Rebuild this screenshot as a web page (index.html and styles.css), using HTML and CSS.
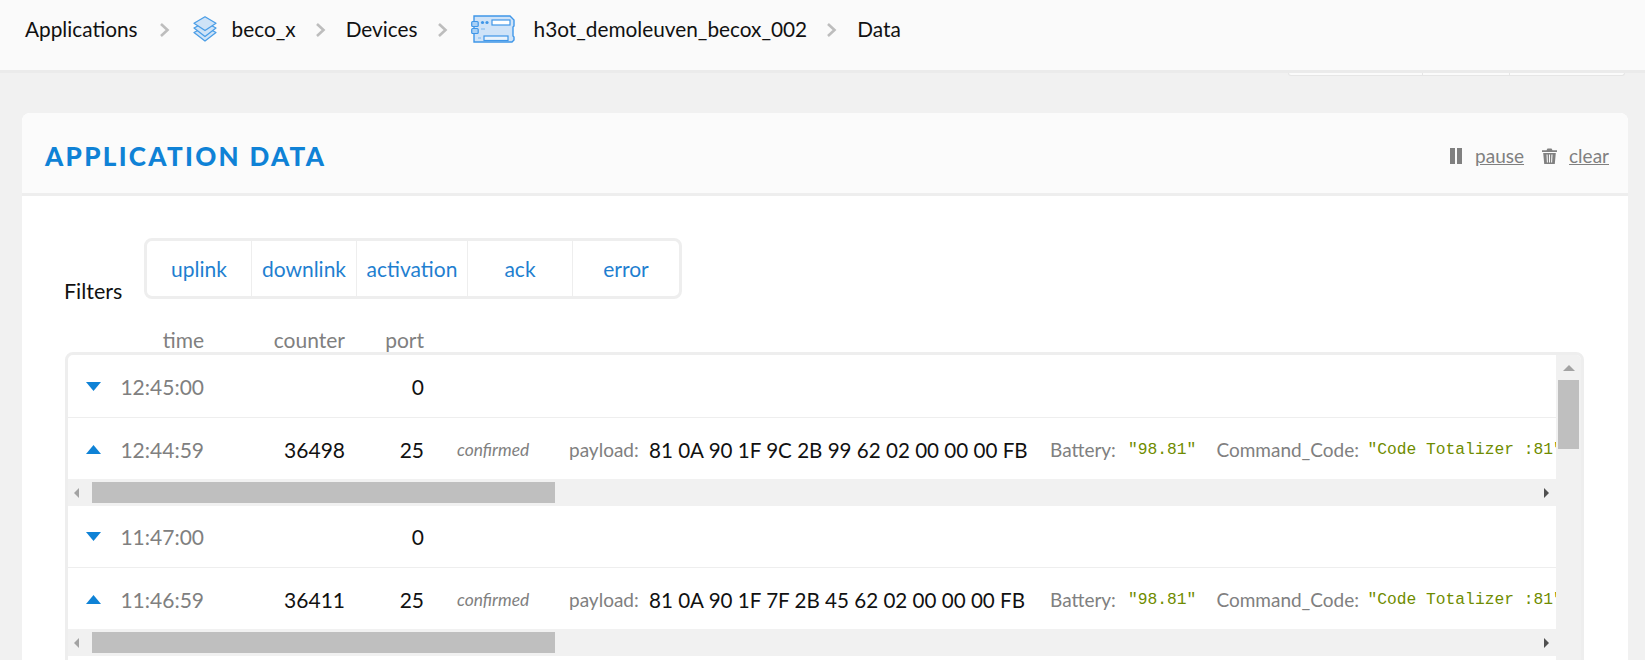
FILE: index.html
```html
<!DOCTYPE html>
<html lang="en">
<head>
<meta charset="utf-8">
<title>Application data</title>
<link rel="stylesheet" href="styles.css">
</head>
<body>
<header class="topbar">
  <nav class="crumbs">
    <span class="crumb">Applications</span>
    <svg class="chev" viewBox="0 0 11 16"><path d="M2 2l6.500 6L2 14" fill="none" stroke="#bdbdbd" stroke-width="2.6"/></svg>
    <svg class="ico-layers" viewBox="0 0 24 26"><g fill="#cfe3f7" stroke="#4a9de6" stroke-width="1.3" stroke-linejoin="round"><path d="M12 10.500l11 6-11 8.500L1 16.500z"/><path d="M12 6l11 6-11 8.500L1 12z"/><path d="M12 .800l11 6.500L12 14.500 1 7.300z"/></g></svg>
    <span class="crumb">beco_x</span>
    <svg class="chev" viewBox="0 0 11 16"><path d="M2 2l6.500 6L2 14" fill="none" stroke="#bdbdbd" stroke-width="2.6"/></svg>
    <span class="crumb">Devices</span>
    <svg class="chev" viewBox="0 0 11 16"><path d="M2 2l6.500 6L2 14" fill="none" stroke="#bdbdbd" stroke-width="2.6"/></svg>
    <svg class="ico-board" viewBox="0 0 44 28">
      <path d="M3 1h36l4 4v6l-1 1v9l1 1v3l-2 2H3z" fill="#cfe3f8" stroke="#3f96e8" stroke-width="1.4"/>
      <rect x="0.700" y="6.500" width="6.500" height="5" rx="1" fill="#a9d0f5" stroke="#3f96e8" stroke-width="1.2"/>
      <rect x="0.700" y="13.500" width="6.500" height="5" rx="1" fill="#a9d0f5" stroke="#3f96e8" stroke-width="1.2"/>
      <circle cx="11.500" cy="7.500" r="1.600" fill="#3f96e8"/><circle cx="16" cy="7.500" r="1.600" fill="#3f96e8"/>
      <rect x="21" y="5" width="18" height="5" fill="#fff" stroke="#3f96e8" stroke-width="1.200"/>
      <rect x="13" y="21" width="24" height="4.500" fill="#eaf3fc" stroke="#3f96e8" stroke-width="1.200"/>
      <path d="M10 14h4M7 23h3" stroke="#a5cdf3" stroke-width="2"/>
    </svg>
    <span class="crumb crumb-device">h3ot_demoleuven_becox_002</span>
    <svg class="chev" viewBox="0 0 11 16"><path d="M2 2l6.500 6L2 14" fill="none" stroke="#bdbdbd" stroke-width="2.6"/></svg>
    <span class="crumb">Data</span>
  </nav>
</header>

<div class="peek-row">
  <div class="peek"><i></i><i></i><i></i></div>
</div>

<section class="card">
  <div class="card-head">
    <h1 class="card-title">APPLICATION DATA</h1>
    <div class="actions">
      <span class="pause-ico"><i></i><i></i></span>
      <a class="action-link">pause</a>
      <svg class="trash" viewBox="0 0 15 16"><path d="M4.500 2.200 5.500.5h4l1 1.700H15v1.800H0V2.200zM1.200 5h12.600l-1 11H2.200zM4.500 6.500l.4 8h1l-.3-8zM7 6.500v8h1v-8zM9.400 6.500l-.3 8h1l.4-8z" fill="#808080" fill-rule="evenodd"/></svg>
      <a class="action-link">clear</a>
    </div>
  </div>

  <div class="card-body">
    <div class="filter-row">
      <span class="filter-label">Filters</span>
      <div class="filters">
        <button class="filter">uplink</button>
        <button class="filter">downlink</button>
        <button class="filter filter-wide">activation</button>
        <button class="filter">ack</button>
        <button class="filter">error</button>
      </div>
    </div>

    <div class="col-heads">
      <span class="col col-time">time</span>
      <span class="col col-counter">counter</span>
      <span class="col col-port">port</span>
    </div>

    <div class="log-box">
      <div class="log-list">
        <div class="row row-down">
          <svg class="tri" viewBox="0 0 15 9"><path d="M0 0h15L7.500 9z"/></svg>
          <span class="col col-time">12:45:00</span>
          <span class="col col-counter val"></span>
          <span class="col col-port val">0</span>
        </div>
        <div class="row row-up">
          <svg class="tri" viewBox="0 0 15 9"><path d="M0 9h15L7.500 0z"/></svg>
          <span class="col col-time">12:44:59</span>
          <span class="col col-counter val">36498</span>
          <span class="col col-port val">25</span>
          <em class="confirmed">confirmed</em>
          <span class="label label-payload">payload:</span>
          <span class="val hex">81 0A 90 1F 9C 2B 99 62 02 00 00 00 FB</span>
          <span class="label label-battery">Battery:</span>
          <code class="code">"98.81"</code>
          <span class="label label-command">Command_Code:</span>
          <code class="code">"Code Totalizer :81"</code>
        </div>
        <div class="hbar"><span class="arrow-left"></span><span class="hthumb"></span><span class="arrow-right"></span></div>

        <div class="row row-down">
          <svg class="tri" viewBox="0 0 15 9"><path d="M0 0h15L7.500 9z"/></svg>
          <span class="col col-time">11:47:00</span>
          <span class="col col-counter val"></span>
          <span class="col col-port val">0</span>
        </div>
        <div class="row row-up">
          <svg class="tri" viewBox="0 0 15 9"><path d="M0 9h15L7.500 0z"/></svg>
          <span class="col col-time">11:46:59</span>
          <span class="col col-counter val">36411</span>
          <span class="col col-port val">25</span>
          <em class="confirmed">confirmed</em>
          <span class="label label-payload">payload:</span>
          <span class="val hex">81 0A 90 1F 7F 2B 45 62 02 00 00 00 FB</span>
          <span class="label label-battery">Battery:</span>
          <code class="code">"98.81"</code>
          <span class="label label-command">Command_Code:</span>
          <code class="code">"Code Totalizer :81"</code>
        </div>
        <div class="hbar"><span class="arrow-left"></span><span class="hthumb"></span><span class="arrow-right"></span></div>
        <div class="row row-down"></div>
      </div>
      <div class="vbar"><span class="arrow-up"></span><span class="vthumb"></span></div>
    </div>
  </div>
</section>
</body>
</html>
```
FILE: styles.css
```css
* { box-sizing: border-box; }
html, body { height: 660px; overflow: hidden; }
body { margin: 0; background: #f1f1f1; font-family: Lato, "Open Sans", sans-serif; font-size: 21px; color: #111; }

.topbar { height: 73px; background: #fafafa; border-bottom: 3px solid #ebebeb; }
.crumbs { display: flex; align-items: center; height: 70px; padding: 0 0 13px 25px; }
.crumb { font-size: 20.8px; line-height: 24px; white-space: nowrap; }
.chev { width: 11px; height: 16px; margin: 2px 20px 0 19px; flex: none; }
.crumb:first-child + .chev { margin: 2px 23px 0 21px; }
.ico-layers { width: 24px; height: 26px; margin-right: 15px; flex: none; }
.ico-board { width: 44px; height: 28px; margin: 0 19px 0 3px; flex: none; }

.peek-row { display: flex; justify-content: flex-end; padding-right: 20px; }
.peek { display: flex; width: 337px; height: 3px; background: #fbfbfb; border: 1px solid #e6e6e6; border-top: 0; border-radius: 0 0 5px 5px; }
.peek i { display: block; height: 2px; border-right: 1px solid #e6e6e6; }
.peek i:nth-child(1) { width: 134px; }
.peek i:nth-child(2) { width: 87px; }
.peek i:nth-child(3) { border: 0; }

.card { margin: 37px 17px 0 22px; background: #fff; border-radius: 8px 8px 0 0; }
.card-head { display: flex; align-items: center; justify-content: space-between; height: 83px; padding: 6px 19px 0 23px; background: #fbfbfb; border-bottom: 3px solid #eeeeee; border-radius: 8px 8px 0 0; }
.card-title { margin: 0; font-size: 26px; line-height: 30px; font-weight: 900; letter-spacing: 2.3px; color: #0f82d6; }
.actions { display: flex; align-items: center; color: #808080; }
.pause-ico { display: flex; gap: 2px; margin-right: 13px; }
.pause-ico i { display: block; width: 5px; height: 16px; background: #808080; }
.action-link { font-size: 19px; line-height: 22px; color: #808080; text-decoration: underline; }
.trash { width: 15px; height: 16px; margin: 0 12px 0 18px; }

.card-body { padding: 42px 44px 0 43px; height: 470px; }
.filter-row { display: flex; align-items: flex-end; height: 61px; }
.filter-label { flex: none; width: 80px; margin: 0 0 -3px -1px; font-size: 21.5px; line-height: 22px; color: #111; }
.filters { display: flex; height: 61px; border: 3px solid #eeeeee; border-radius: 8px; background: #fff; }
.filter { width: 105px; height: 55px; padding: 0; border: 0; border-right: 1px solid #eeeeee; background: transparent; font-family: inherit; font-size: 21px; color: #1f7fd0; }
.filter:last-child { border-right: 0; width: 106px; }
.filter-wide { width: 111px; }

.col-heads { display: flex; height: 53px; padding: 26px 0 0 36px; line-height: 30px; color: #808080; }
.col { display: block; text-align: right; flex: none; color: #808080; font-size: 21px; }
.col-time { width: 103px; }
.col-counter { width: 141px; }
.col-port { width: 79px; }
.col.val { color: #111; }

.log-box { display: flex; height: 400px; border: 3px solid #eeeeee; border-radius: 8px 8px 0 0; background: #fff; overflow: hidden; }
.log-list { flex: 1; min-width: 0; overflow: hidden; }
.row { display: flex; align-items: center; padding-left: 18px; white-space: nowrap; overflow: hidden; }
.row-down { height: 63px; border-bottom: 1px solid #eeeeee; }
.hbar + .row-down { height: 62px; }
.row-up { height: 61px; padding-top: 2px; }
.tri { width: 15px; height: 9px; flex: none; fill: #0f82d6; }
.val { color: #111; }
.confirmed { width: 112px; margin-left: 33px; flex: none; font-size: 17.4px; color: #808080; }
.label { flex: none; font-size: 19px; color: #808080; }
.label-payload { width: 80px; }
.hex { flex: none; width: 401px; font-size: 20.6px; }
.label-battery { width: 78px; }
.label-command { width: 151px; margin-left: 20px; }
.code { flex: none; font-family: "Liberation Mono", monospace; font-size: 16.3px; color: #6f8c00; }

.hbar { display: flex; align-items: center; height: 27px; background: #f1f1f1; }
.arrow-left { width: 0; height: 0; margin-left: 6px; border: 5px solid transparent; border-left: 0; border-right: 5px solid #a3a3a3; }
.hthumb { width: 463px; height: 21px; margin-left: 13px; background: #bfbfbf; }
.arrow-right { width: 0; height: 0; margin-left: auto; margin-right: 7px; border: 5.500px solid transparent; border-right: 0; border-left: 5px solid #505050; }

.vbar { flex: none; width: 25px; background: #f1f1f1; padding-top: 10px; }
.arrow-up { display: block; width: 0; height: 0; margin: 0 auto; border: 6px solid transparent; border-top: 0; border-bottom: 6px solid #a3a3a3; }
.vthumb { display: block; width: 21px; height: 69px; margin: 9px 0 0 2px; background: #bfbfbf; }
```
